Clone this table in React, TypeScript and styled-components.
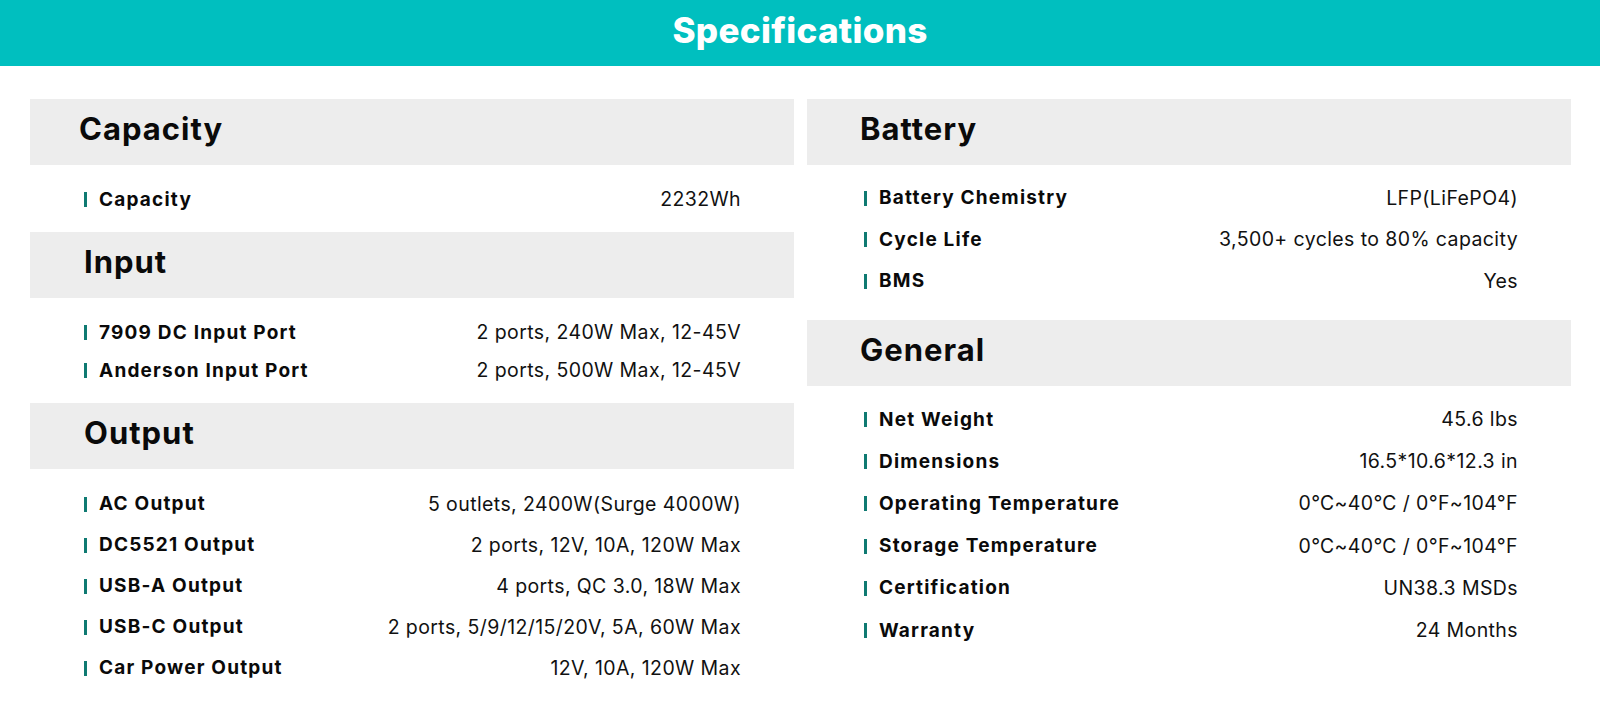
import React from "react";
import styled, { createGlobalStyle } from "styled-components";

const GlobalStyle = createGlobalStyle`
  html, body {
    margin: 0;
    padding: 0;
    background: #ffffff;
  }
  body {
    font-family: Inter, "Liberation Sans", Arial, sans-serif;
    color: #111111;
  }
`;

const Page = styled.div`
  width: 1600px;
  min-height: 709px;
  background: #ffffff;
`;

const TitleBar = styled.header`
  height: 66px;
  background: #00bfbf;
  display: flex;
  align-items: center;
  justify-content: center;
  padding-bottom: 6px;
  box-sizing: border-box;
`;

const Title = styled.h1`
  margin: 0;
  font-family: Inter, "Liberation Sans", sans-serif;
  font-weight: 800;
  font-size: 35px;
  letter-spacing: 0.3px;
  color: #ffffff;
  line-height: 1;
`;

const Columns = styled.main`
  display: grid;
  grid-template-columns: 1fr 1fr;
  column-gap: 13px;
  padding: 33px 29px 0 30px;
  align-items: start;
`;

const Column = styled.section`
  display: flex;
  flex-direction: column;
`;

const Band = styled.div<{ $indent: number }>`
  height: 66px;
  background: #ededed;
  display: flex;
  align-items: center;
  padding: 0 0 7px ${(p) => p.$indent}px;
  box-sizing: border-box;
`;

const BandTitle = styled.h2`
  margin: 0;
  font-family: Inter, "Liberation Sans", sans-serif;
  font-weight: 700;
  font-size: 31px;
  letter-spacing: 1px;
  line-height: 1;
  color: #0a0a0a;
`;

const Body = styled.div<{ $top: number; $bottom: number }>`
  display: flex;
  flex-direction: column;
  padding: ${(p) => p.$top}px 53px ${(p) => p.$bottom}px 0;
`;

const Row = styled.div<{ $h: number; $indent: number }>`
  height: ${(p) => p.$h}px;
  display: flex;
  align-items: center;
  justify-content: space-between;
  padding-left: ${(p) => p.$indent}px;
`;

const Label = styled.span`
  display: flex;
  align-items: center;
  gap: 12px;
  font-family: Inter, "Liberation Sans", sans-serif;
  font-weight: 700;
  font-size: 19px;
  letter-spacing: 1.2px;
  color: #0a0a0a;
  white-space: nowrap;
  &::before {
    content: "";
    display: block;
    width: 3px;
    height: 15px;
    margin-top: 1px;
    background: #0f7a72;
  }
`;

const Value = styled.span`
  font-family: Inter, "Liberation Sans", sans-serif;
  font-weight: 400;
  font-size: 19.5px;
  letter-spacing: 0.4px;
  color: #111111;
  white-space: nowrap;
`;

type Spec = [string, string];

interface SectionProps {
  title: string;
  titleIndent: number;
  rowIndent: number;
  rowH: number;
  top: number;
  bottom: number;
  rows: Spec[];
}

const Section: React.FC<SectionProps> = ({ title, titleIndent, rowIndent, rowH, top, bottom, rows }) => (
  <>
    <Band $indent={titleIndent}>
      <BandTitle>{title}</BandTitle>
    </Band>
    <Body $top={top} $bottom={bottom}>
      {rows.map(([k, v]) => (
        <Row key={k} $h={rowH} $indent={rowIndent}>
          <Label>{k}</Label>
          <Value>{v}</Value>
        </Row>
      ))}
    </Body>
  </>
);

export default function App() {
  return (
    <Page>
      <GlobalStyle />
      <TitleBar>
        <Title>Specifications</Title>
      </TitleBar>
      <Columns>
        <Column>
          <Section
            title="Capacity"
            titleIndent={49}
            rowIndent={54}
            rowH={38}
            top={15}
            bottom={14}
            rows={[["Capacity", "2232Wh"]]}
          />
          <Section
            title="Input"
            titleIndent={54}
            rowIndent={54}
            rowH={38}
            top={15}
            bottom={14}
            rows={[
              ["7909 DC Input Port", "2 ports, 240W Max, 12-45V"],
              ["Anderson Input Port", "2 ports, 500W Max, 12-45V"],
            ]}
          />
          <Section
            title="Output"
            titleIndent={54}
            rowIndent={54}
            rowH={41}
            top={14}
            bottom={0}
            rows={[
              ["AC Output", "5 outlets, 2400W(Surge 4000W)"],
              ["DC5521 Output", "2 ports, 12V, 10A, 120W Max"],
              ["USB-A Output", "4 ports, QC 3.0, 18W Max"],
              ["USB-C Output", "2 ports, 5/9/12/15/20V, 5A, 60W Max"],
              ["Car Power Output", "12V, 10A, 120W Max"],
            ]}
          />
        </Column>
        <Column>
          <Section
            title="Battery"
            titleIndent={53}
            rowIndent={57}
            rowH={41.5}
            top={12}
            bottom={18.5}
            rows={[
              ["Battery Chemistry", "LFP(LiFePO4)"],
              ["Cycle Life", "3,500+ cycles to 80% capacity"],
              ["BMS", "Yes"],
            ]}
          />
          <Section
            title="General"
            titleIndent={53}
            rowIndent={57}
            rowH={42.2}
            top={12}
            bottom={0}
            rows={[
              ["Net Weight", "45.6 lbs"],
              ["Dimensions", "16.5*10.6*12.3 in"],
              ["Operating Temperature", "0℃~40℃ / 0°F~104°F"],
              ["Storage Temperature", "0℃~40℃ / 0°F~104°F"],
              ["Certification", "UN38.3 MSDs"],
              ["Warranty", "24 Months"],
            ]}
          />
        </Column>
      </Columns>
    </Page>
  );
}
